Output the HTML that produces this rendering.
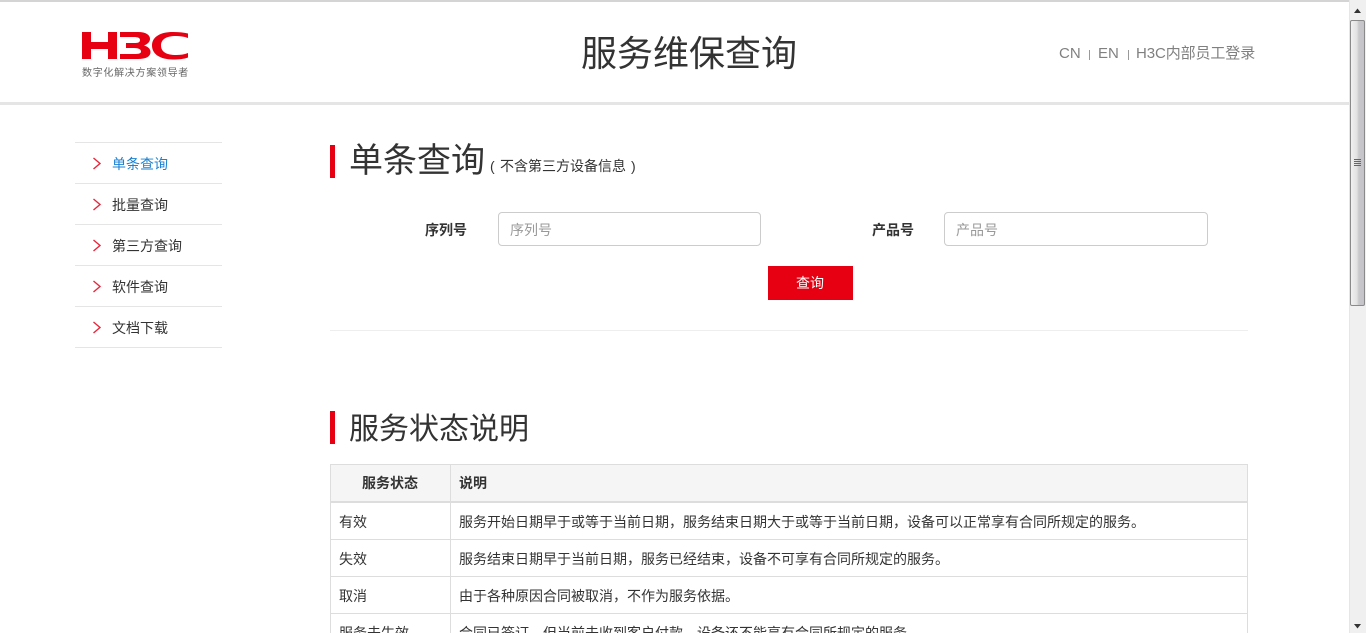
<!DOCTYPE html>
<html lang="zh-CN"><head><meta charset="utf-8"><title>服务维保查询</title>
<style>
html,body{margin:0;padding:0;overflow:hidden;background:#fff}
body{width:1366px;height:633px;position:relative;font-family:"Liberation Sans","Noto Sans CJK SC",sans-serif;color:#333}
.a{position:absolute;white-space:nowrap}
.r{position:absolute;background:#e60012}
.l{position:absolute;background:#e5e5e5}
.nav{position:absolute;left:112px;font-size:14px;line-height:20px;color:#333}
.ch{position:absolute;left:92px}
.t{position:absolute;font-size:14px;line-height:20px;color:#333;white-space:nowrap}
.v{position:absolute;background:#ddd;width:1px}
.h{position:absolute;background:#ddd;height:1px;left:330px;width:918px}
.inp{position:absolute;top:212px;height:32px;width:261px;border:1px solid #ccc;border-radius:4px;background:#fff}
.inp span{position:absolute;left:11px;top:7px;font-size:14px;line-height:20px;color:#999}
</style></head><body>
<div class="l" style="left:0;top:0;width:1349px;height:2px;background:#d4d4d4"></div>
<div class="l" style="left:0;top:102px;width:1349px;height:3px"></div>

<svg class="a" style="left:82px;top:32px" width="107" height="28" viewBox="0 0 107 28">
<path fill="#e60012" d="M0 0H9V10H26V0H35V27H26V17H9V27H0Z"/>
<path fill="#e60012" d="M38 0H56C64 0 68 3 68 7C68 10 65 12.500 62 13.500C66 14.500 68.500 17 68.500 20C68.500 24.500 64 27 56 27H38V22H52C57 22 59 21.500 59 19.500C59 17.500 57 16 52 16H44V11H52C56 11 58 10.500 58 8C58 6 56 5 52 5H38Z"/>
<path fill="#e60012" d="M106 1.500C102 .5 97 0 91 0C78 0 70 5 70 13.500C70 22 78 27.500 91 27.500C97 27.500 102 27 106 25.500V21C102 22.500 98 23 94 23C84 23 79 19.500 79 13.500C79 7.500 84 4 94 4C98 4 102 4.500 106 6Z"/>
</svg>
<div class="a" style="left:82px;top:67px;font-size:10px;line-height:13px;color:#666;width:107px;letter-spacing:.7px">数字化解决方案领导者</div>

<div class="a" style="left:581px;top:28px;font-size:36px;line-height:52px;color:#333">服务维保查询</div>
<div class="a" style="left:1059px;top:44px;font-size:15px;line-height:20px;color:#808080">CN</div>
<div class="a" style="left:1089px;top:50px;width:1px;height:10px;background:#999"></div>
<div class="a" style="left:1098px;top:44px;font-size:15px;line-height:20px;color:#808080">EN</div>
<div class="a" style="left:1128px;top:50px;width:1px;height:10px;background:#999"></div>
<div class="a" style="left:1136px;top:44px;font-size:15px;line-height:20px;color:#808080;letter-spacing:-.1px">H3C内部员工登录</div>

<div class="l" style="left:75px;top:142px;width:147px;height:1px"></div>
<div class="l" style="left:75px;top:183px;width:147px;height:1px"></div>
<div class="l" style="left:75px;top:224px;width:147px;height:1px"></div>
<div class="l" style="left:75px;top:265px;width:147px;height:1px"></div>
<div class="l" style="left:75px;top:306px;width:147px;height:1px"></div>
<div class="l" style="left:75px;top:347px;width:147px;height:1px"></div>
<svg class="ch" style="top:157px" width="10" height="13"><path d="M1.500 1L8 6.500L1.500 12" fill="none" stroke="#e6283c" stroke-width="1.400"/></svg>
<svg class="ch" style="top:198px" width="10" height="13"><path d="M1.500 1L8 6.500L1.500 12" fill="none" stroke="#e6283c" stroke-width="1.400"/></svg>
<svg class="ch" style="top:239px" width="10" height="13"><path d="M1.500 1L8 6.500L1.500 12" fill="none" stroke="#e6283c" stroke-width="1.400"/></svg>
<svg class="ch" style="top:280px" width="10" height="13"><path d="M1.500 1L8 6.500L1.500 12" fill="none" stroke="#e6283c" stroke-width="1.400"/></svg>
<svg class="ch" style="top:321px" width="10" height="13"><path d="M1.500 1L8 6.500L1.500 12" fill="none" stroke="#e6283c" stroke-width="1.400"/></svg>
<div class="nav" style="top:154px;color:#1b82d2">单条查询</div>
<div class="nav" style="top:195px">批量查询</div>
<div class="nav" style="top:236px">第三方查询</div>
<div class="nav" style="top:277px">软件查询</div>
<div class="nav" style="top:318px">文档下载</div>

<div class="r" style="left:330px;top:145px;width:5px;height:33px"></div>
<div class="a" style="left:349px;top:137px;font-size:34px;line-height:48px;color:#333">单条查询</div>
<div class="a" style="left:490px;top:156px;font-size:14px;line-height:20px;color:#333">(</div>
<div class="a" style="left:500px;top:156px;font-size:14px;line-height:20px;color:#333">不含第三方设备信息</div>
<div class="a" style="left:631px;top:156px;font-size:14px;line-height:20px;color:#333">)</div>

<div class="a" style="left:425px;top:220px;font-size:14px;line-height:20px;font-weight:bold;color:#333">序列号</div>
<div class="inp" style="left:498px"><span>序列号</span></div>
<div class="a" style="left:872px;top:220px;font-size:14px;line-height:20px;font-weight:bold;color:#333">产品号</div>
<div class="inp" style="left:944px;width:262px"><span>产品号</span></div>
<div class="r" style="left:768px;top:266px;width:84px;padding-right:1px;height:34px;color:#fff;font-size:14px;line-height:34px;text-align:center">查询</div>
<div class="l" style="left:330px;top:330px;width:918px;height:1px;background:#eee"></div>

<div class="r" style="left:330px;top:411px;width:5px;height:33px"></div>
<div class="a" style="left:349px;top:408px;font-size:30px;line-height:44px;color:#333">服务状态说明</div>

<div class="a" style="left:331px;top:465px;width:916px;height:36px;background:#f5f5f5"></div>
<div class="h" style="top:464px"></div>
<div class="h" style="top:501px;height:2px"></div>
<div class="h" style="top:539px"></div>
<div class="h" style="top:576px"></div>
<div class="h" style="top:613px"></div>
<div class="v" style="left:330px;top:464px;height:169px"></div>
<div class="v" style="left:450px;top:464px;height:169px"></div>
<div class="v" style="left:1247px;top:464px;height:169px"></div>

<div class="t" style="left:362px;top:473px;font-weight:bold">服务状态</div>
<div class="t" style="left:459px;top:473px;font-weight:bold">说明</div>
<div class="t" style="left:339px;top:512px">有效</div>
<div class="t" style="left:459px;top:512px">服务开始日期早于或等于当前日期，服务结束日期大于或等于当前日期，设备可以正常享有合同所规定的服务。</div>
<div class="t" style="left:339px;top:549px">失效</div>
<div class="t" style="left:459px;top:549px">服务结束日期早于当前日期，服务已经结束，设备不可享有合同所规定的服务。</div>
<div class="t" style="left:339px;top:586px">取消</div>
<div class="t" style="left:459px;top:586px">由于各种原因合同被取消，不作为服务依据。</div>
<div class="t" style="left:339px;top:623px">服务未生效</div>
<div class="t" style="left:459px;top:623px">合同已签订，但当前未收到客户付款，设备还不能享有合同所规定的服务。</div>

<div class="a" style="left:1349px;top:0;width:17px;height:633px;background:#f0f0f0;border-left:1px solid #e6e6e6;box-sizing:border-box"></div>
<svg class="a" style="left:1349px;top:0" width="17" height="633">
<path d="M5 13H12L8.500 8.500Z" fill="#333"/>
<path d="M5 624H12L8.500 628.500Z" fill="#333"/>
<defs><linearGradient id="g" x1="0" x2="1" y1="0" y2="0"><stop offset="0" stop-color="#f2f2f2"/><stop offset=".45" stop-color="#e2e2e2"/><stop offset=".6" stop-color="#c8c8cc"/><stop offset="1" stop-color="#c4c4c8"/></linearGradient></defs>
<rect x="1.500" y="20.500" width="14" height="285" rx="1.500" fill="url(#g)" stroke="#8a8a8a"/>
<path d="M5 159.500H12M5 161.500H12M5 163.500H12M5 165.500H12" stroke="#666" stroke-width="1"/>
</svg>
</body></html>
